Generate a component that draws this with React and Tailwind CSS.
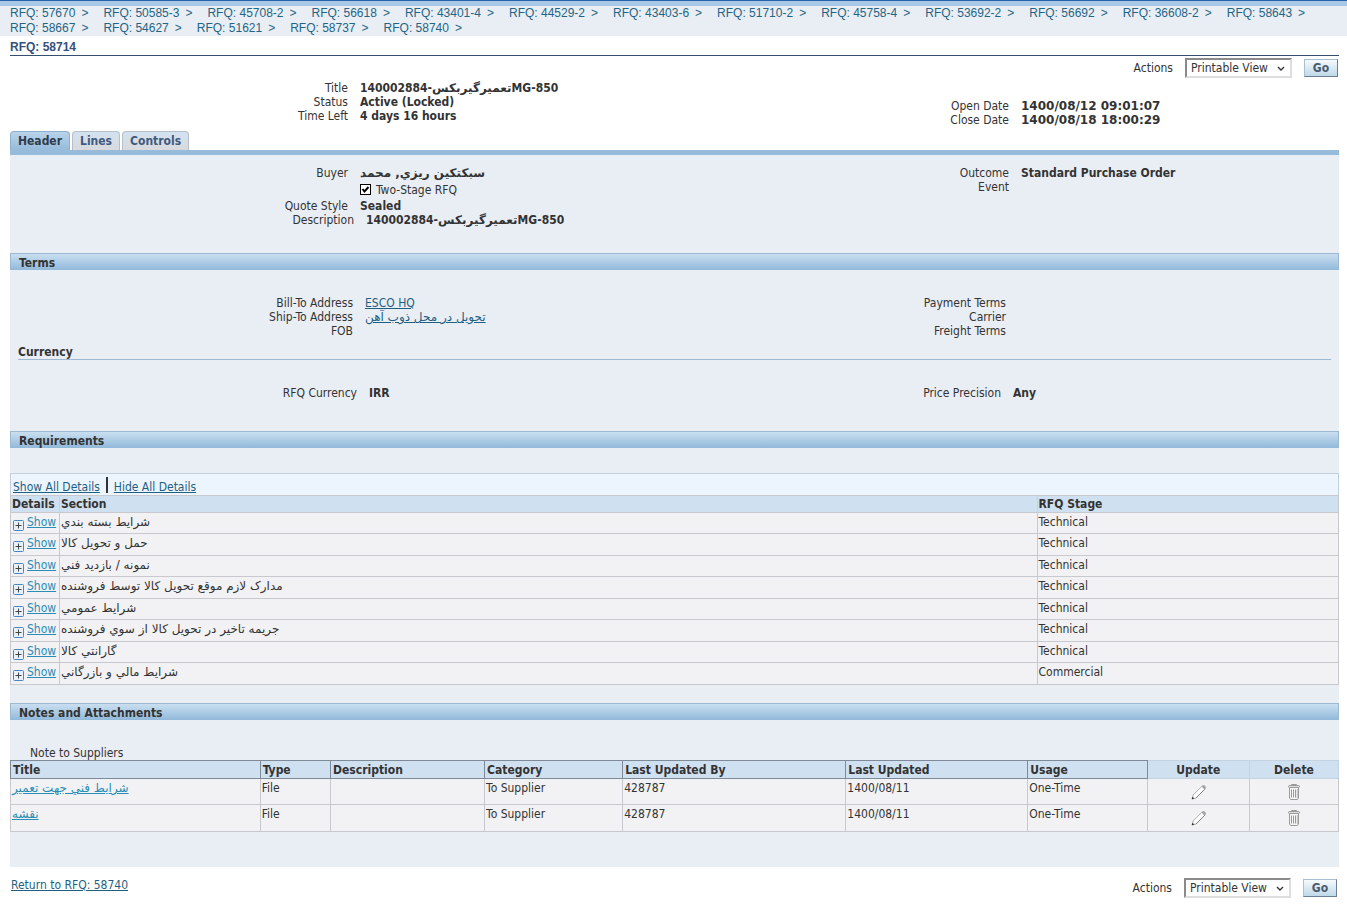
import { useState } from 'react';
import clsx from 'clsx';

const breadcrumbs = [
  '57670', '50585-3', '45708-2', '56618', '43401-4', '44529-2', '43403-6', '51710-2', '45758-4',
  '53692-2', '56692', '36608-2', '58643', '58667', '54627', '51621', '58737', '58740',
];

const requirements = [
  { section: 'شرايط بسته بندي', stage: 'Technical' },
  { section: 'حمل و تحويل کالا', stage: 'Technical' },
  { section: 'نمونه / بازديد فني', stage: 'Technical' },
  { section: 'مدارک لازم موقع تحويل کالا توسط فروشنده', stage: 'Technical' },
  { section: 'شرايط عمومي', stage: 'Technical' },
  { section: 'جريمه تاخير در تحويل کالا از سوي فروشنده', stage: 'Technical' },
  { section: 'گارانتي کالا', stage: 'Technical' },
  { section: 'شرايط مالي و بازرگاني', stage: 'Commercial' },
];

const attachments = [
  { title: 'شرايط فني جهت تعمير', type: 'File', description: '', category: 'To Supplier', by: '428787', date: '1400/08/11', usage: 'One-Time' },
  { title: 'نقشه', type: 'File', description: '', category: 'To Supplier', by: '428787', date: '1400/08/11', usage: 'One-Time' },
];

const attachmentColumns = [
  { label: 'Title', width: 'w-[18.8%]' },
  { label: 'Type', width: 'w-[5.3%]' },
  { label: 'Description', width: 'w-[11.6%]' },
  { label: 'Category', width: 'w-[10.4%]' },
  { label: 'Last Updated By', width: 'w-[16.8%]' },
  { label: 'Last Updated', width: 'w-[13.7%]' },
  { label: 'Usage', width: 'w-[9%]' },
];

function Wide({ children }) {
  return <span className="font-['DejaVu_Sans',sans-serif]">{children}</span>;
}

function Actions({ id }) {
  return (
    <form className="flex items-center" onSubmit={(e) => e.preventDefault()}>
      <label htmlFor={id} className="mr-3">Actions</label>
      <div className="relative mr-3">
        <select
          id={id}
          className="block h-5 w-[107px] appearance-none border-2 border-t-[#8a8a8a] border-l-[#8a8a8a] border-r-[#dedede] border-b-[#dedede] bg-white pl-1 leading-4"
        >
          <option>Printable View</option>
        </select>
        <svg viewBox="0 0 8 6" className="pointer-events-none absolute top-2 right-[7px] h-[6px] w-2" fill="none" stroke="#333" strokeWidth="1.4">
          <path d="M1 1l3 3 3-3" />
        </svg>
      </div>
      <button
        type="submit"
        className="h-[18px] w-[34px] border border-t-[#a9bfd2] border-l-[#a9bfd2] border-r-[#6b7f93] border-b-[#6b7f93] bg-linear-to-b from-[#f6fafc] to-[#bfd9e8] font-bold leading-4 text-[#4b5b70]"
      >
        Go
      </button>
    </form>
  );
}

function Field({ label, cols, children }) {
  return (
    <div className={clsx('grid', cols)}>
      <dt className="pr-3 text-right">{label}</dt>
      <dd className="font-bold">{children}</dd>
    </div>
  );
}

function SectionTitle({ children }) {
  return (
    <h2 className="h-[17px] border border-b-0 border-[#9db9d2] bg-linear-to-b from-[#c9dff0] to-[#91b9da] pl-2 font-bold leading-[18px]">
      {children}
    </h2>
  );
}

function PlusIcon() {
  return (
    <svg viewBox="0 0 11 11" className="h-[11px] w-[11px] shrink-0" fill="none">
      <rect x="0.5" y="0.5" width="10" height="10" rx="1" fill="#e6f2fb" stroke="#4a86bd" />
      <path d="M5.5 2.5v6M2.5 5.5h6" stroke="#444" />
    </svg>
  );
}

function PencilIcon() {
  return (
    <svg viewBox="0 0 16 16" className="h-4 w-4" fill="none">
      <path d="M1 15l1.2-4L11 2.2c1.4-1.2 4.2 1 2.9 2.9L5 14z" fill="#fff" stroke="#adadad" />
      <path d="M5 14l8.9-8.9" stroke="#808080" />
      <path d="M10.6 2.6l1.2-1.1c1.4-.9 3.8 1 2.7 2.7l-1.1 1.2z" fill="#a3a3a3" />
      <path d="M.8 15.3l.7-2.5 1.9 1.8z" fill="#333" />
    </svg>
  );
}

function TrashIcon() {
  return (
    <svg viewBox="0 0 14 16" className="h-4 w-[14px]" fill="none" stroke="#9a9a9a">
      <path d="M4.5 2.5v-2h5v2" />
      <rect x="1.5" y="1.5" width="11" height="2" rx="1" fill="#ddd" />
      <path d="M2.5 3.5h9v10.5l-1 1.5h-7l-1-1.5z" fill="#f6f6f6" />
      <path d="M4.5 5.5v8M6.5 5.5v8M8.5 5.5v8" />
      <path d="M10.3 5v9" stroke="#bbb" />
    </svg>
  );
}

function Tabs() {
  const [active, setActive] = useState('Header');
  return (
    <div role="tablist" className="flex gap-[2px] border-b-[5px] border-[#96bbdb]">
      {['Header', 'Lines', 'Controls'].map((tab) => (
        <button
          key={tab}
          type="button"
          role="tab"
          aria-selected={active === tab}
          onClick={() => setActive(tab)}
          className={clsx(
            'h-[19px] rounded-t border border-b-0 px-[7px] font-bold leading-[18px]',
            active === tab
              ? 'border-[#8fb0cc] bg-linear-to-b from-[#b9d3e9] to-[#96bbdb] text-[#2e3c4c]'
              : 'border-[#b5bfca] bg-linear-to-b from-[#d3e2f0] to-[#d8dadd] text-[#3f5a80]',
          )}
        >
          {tab}
        </button>
      ))}
    </div>
  );
}

function RequirementsTable() {
  return (
    <>
      <div className="flex h-[22px] items-end border border-b-0 border-[#c3cfdb] bg-[#ecf5fe] px-[2px] pb-px text-[#1f5f82]">
        <a href="#show-all" className="underline">Show All Details</a>
        <span className="mx-[6px] mb-px h-4 w-[2px] bg-[#333]" />
        <a href="#hide-all" className="underline">Hide All Details</a>
      </div>
      <table className="w-full table-fixed border-collapse border border-[#c8c9cf] bg-[#f2f2f5]">
        <thead>
          <tr className="h-[17px] bg-[#cfe0f1] text-left">
            <th className="w-[49px] border-r border-[#c3d3e2] p-0 pl-px">Details</th>
            <th className="p-0 pl-px">Section</th>
            <th className="w-[22.7%] border-l border-[#c3d3e2] p-0 pl-px">RFQ Stage</th>
          </tr>
        </thead>
        <tbody>
          {requirements.map((r) => (
            <tr key={r.section} className="h-[21px] align-top even:h-[22px]">
              <td className="border border-[#c8c9cf] p-0 pl-[2px]">
                <div className="flex items-start gap-[3px] pt-[2px]">
                  <span className="pt-[5px]"><PlusIcon /></span>
                  <a href="#details" className="text-[#2a8db5] underline">Show</a>
                </div>
              </td>
              <td className="border border-[#c8c9cf] p-0 pt-[2px] pl-px"><Wide>{r.section}</Wide></td>
              <td className="border border-[#c8c9cf] p-0 pt-[2px] pl-px">{r.stage}</td>
            </tr>
          ))}
        </tbody>
      </table>
    </>
  );
}

function AttachmentsTable() {
  return (
    <table className="w-full table-fixed border-collapse border border-[#c8c9cf] bg-[#f2f2f5]">
      <thead>
        <tr className="h-[18px] bg-[#cfe0f1] text-left">
          {attachmentColumns.map((c) => (
            <th key={c.label} className={clsx('border border-[#7f8a98] p-0 pl-[2px]', c.width)}>{c.label}</th>
          ))}
          <th className="w-[7.7%] border border-[#c3d3e2] p-0 text-center">Update</th>
          <th className="border border-[#c3d3e2] p-0 text-center">Delete</th>
        </tr>
      </thead>
      <tbody>
        {attachments.map((a) => (
          <tr key={a.title} className="h-[26px] align-top even:h-[27px] *:border *:border-[#c8c9cf] *:p-0 *:pt-[2px] *:pl-px">
            <td><a href="#attachment" className="text-[#2a8db5] underline"><Wide>{a.title}</Wide></a></td>
            <td>{a.type}</td>
            <td>{a.description}</td>
            <td>{a.category}</td>
            <td>{a.by}</td>
            <td>{a.date}</td>
            <td>{a.usage}</td>
            <td>
              <button type="button" aria-label="Update" className="mx-auto block pt-[3px]"><PencilIcon /></button>
            </td>
            <td>
              <button type="button" aria-label="Delete" className="mx-auto block pt-[3px]"><TrashIcon /></button>
            </td>
          </tr>
        ))}
      </tbody>
    </table>
  );
}

export default function App() {
  const [twoStage, setTwoStage] = useState(true);

  return (
    <div className="bg-white font-['DejaVu_Sans_Condensed','DejaVu_Sans',sans-serif] text-[12px] leading-[14px] text-[#333]">
      <nav className="border-t border-[#2a62a8] bg-[#e9eef5] font-['Liberation_Sans',Arial,sans-serif] leading-[15px] text-[#1f6585]">
        <div className="h-[5px] bg-[#a9c8e8]" />
        <ol className="flex flex-wrap gap-x-[15px] px-[10px]">
          {breadcrumbs.map((b) => (
            <li key={b}>
              <a href="#rfq">RFQ: {b}</a>
              <span className="ml-[6px]">&gt;</span>
            </li>
          ))}
        </ol>
      </nav>

      <main className="pr-2 pl-[10px]">
        <h1 className="border-b border-[#35506e] pt-1 font-['Liberation_Sans',Arial,sans-serif] font-bold leading-[15px] text-[#34507c]">
          RFQ: 58714
        </h1>

        <div className="flex justify-end pt-[2px] pr-px">
          <Actions id="actions-top" />
        </div>

        <dl className="grid grid-cols-[661fr_668fr] pb-1">
          <div className="pt-[3px]">
            <Field label="Title" cols="grid-cols-[350fr_311fr]">140002884-<Wide>تعميرگيربکس</Wide>MG-850</Field>
            <Field label="Status" cols="grid-cols-[350fr_311fr]">Active (Locked)</Field>
            <Field label="Time Left" cols="grid-cols-[350fr_311fr]">4 days 16 hours</Field>
          </div>
          <div className="pt-[21px]">
            <Field label="Open Date" cols="grid-cols-[350fr_318fr]"><Wide>1400/08/12 09:01:07</Wide></Field>
            <Field label="Close Date" cols="grid-cols-[350fr_318fr]"><Wide>1400/08/18 18:00:29</Wide></Field>
          </div>
        </dl>

        <Tabs />

        <div className="bg-[#e9eef5] pb-[35px]">
          <dl className="grid grid-cols-[661fr_668fr] pt-[11px] pb-[26px]">
            <div>
              <Field label="Buyer" cols="grid-cols-[350fr_311fr]"><Wide>سبکتکين ريزي, محمد</Wide></Field>
              <Field label="" cols="grid-cols-[350fr_311fr]">
                <label className="flex h-[19px] items-center gap-[5px] font-normal">
                  <span className="relative">
                    <input
                      type="checkbox"
                      checked={twoStage}
                      onChange={(e) => setTwoStage(e.target.checked)}
                      className="peer block h-[11px] w-[11px] appearance-none border border-black bg-white"
                    />
                    <svg viewBox="0 0 11 11" className="pointer-events-none absolute inset-0 hidden h-[11px] w-[11px] peer-checked:block" fill="none" stroke="#000" strokeWidth="2">
                      <path d="M2.5 5l2 2.5 4-4.5" />
                    </svg>
                  </span>
                  Two-Stage RFQ
                </label>
              </Field>
              <Field label="Quote Style" cols="grid-cols-[350fr_311fr]">Sealed</Field>
              <Field label="Description" cols="grid-cols-[356fr_305fr]">140002884-<Wide>تعميرگيربکس</Wide>MG-850</Field>
            </div>
            <div>
              <Field label="Outcome" cols="grid-cols-[350fr_318fr]">Standard Purchase Order</Field>
              <Field label="Event" cols="grid-cols-[350fr_318fr]" />
            </div>
          </dl>

          <SectionTitle>Terms</SectionTitle>
          <dl className="grid grid-cols-[661fr_668fr] pt-[26px]">
            <div>
              <Field label="Bill-To Address" cols="grid-cols-[355fr_306fr]">
                <a href="#bill-to" className="font-normal text-[#1f5f82] underline">ESCO HQ</a>
              </Field>
              <Field label="Ship-To Address" cols="grid-cols-[355fr_306fr]">
                <a href="#ship-to" className="font-normal text-[#1f5f82] underline"><Wide>تحويل در محل ذوب آهن</Wide></a>
              </Field>
              <Field label="FOB" cols="grid-cols-[355fr_306fr]" />
            </div>
            <div>
              <Field label="Payment Terms" cols="grid-cols-[347fr_321fr]" />
              <Field label="Carrier" cols="grid-cols-[347fr_321fr]" />
              <Field label="Freight Terms" cols="grid-cols-[347fr_321fr]" />
            </div>
          </dl>
          <h3 className="mx-2 mt-[7px] border-b border-[#9db9d2] font-bold">Currency</h3>
          <dl className="grid grid-cols-[661fr_668fr] pt-[26px] pb-[31px]">
            <Field label="RFQ Currency" cols="grid-cols-[359fr_302fr]">IRR</Field>
            <Field label="Price Precision" cols="grid-cols-[342fr_326fr]">Any</Field>
          </dl>

          <SectionTitle>Requirements</SectionTitle>
          <div className="pt-[25px] pb-[18px]">
            <RequirementsTable />
          </div>

          <SectionTitle>Notes and Attachments</SectionTitle>
          <p className="pt-[26px] pl-5">Note to Suppliers</p>
          <AttachmentsTable />
        </div>

        <footer className="flex items-start justify-between pt-[11px] pr-[2px] pb-[10px] pl-px">
          <a href="#return" className="text-[#1f5f82] underline">Return to RFQ: 58740</a>
          <Actions id="actions-bottom" />
        </footer>
      </main>
    </div>
  );
}
